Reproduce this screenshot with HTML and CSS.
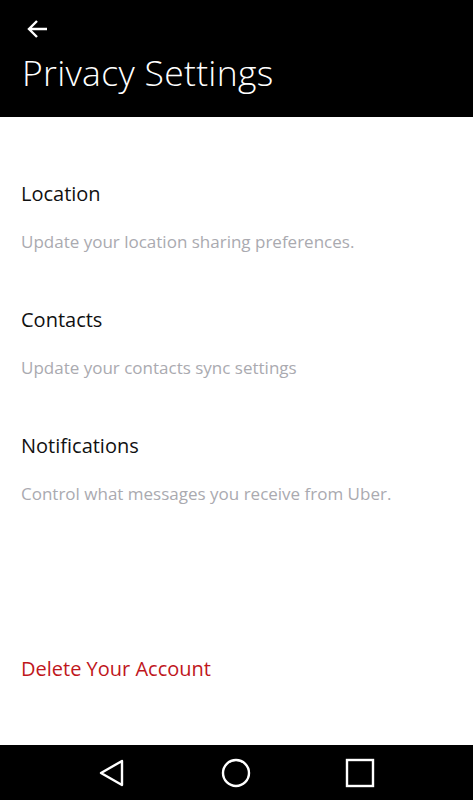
FILE: index.html
```html
<!DOCTYPE html>
<html lang="en">
<head>
    <meta charset="UTF-8">
    <meta name="viewport" content="width=device-width, initial-scale=1.0">
    <title>Privacy Settings</title>
    <link rel="stylesheet" href="styles.css">
</head>
<body>
    <div class="screen">
        <header class="topbar">
            <svg class="back" width="22" height="20" viewBox="0 0 22 20">
                <path d="M21 10H3M11 2L3 10l8 8" fill="none" stroke="#fff" stroke-width="2.4"/>
            </svg>
            <h1>Privacy Settings</h1>
        </header>

        <main class="content">
            <div class="setting">
                <h2>Location</h2>
                <p>Update your location sharing preferences.</p>
            </div>
            <div class="setting">
                <h2>Contacts</h2>
                <p>Update your contacts sync settings</p>
            </div>
            <div class="setting">
                <h2>Notifications</h2>
                <p>Control what messages you receive from Uber.</p>
            </div>

            <a class="delete" href="#">Delete Your Account</a>
        </main>

        <nav class="navbar">
            <svg width="28" height="30" viewBox="0 0 28 30">
                <path d="M24 3L3 15l21 12z" fill="none" stroke="#fff" stroke-width="2.4" stroke-linejoin="round"/>
            </svg>
            <svg width="30" height="30" viewBox="0 0 30 30">
                <circle cx="15" cy="15" r="13" fill="none" stroke="#fff" stroke-width="2.4"/>
            </svg>
            <svg width="30" height="30" viewBox="0 0 30 30">
                <rect x="2" y="2" width="26" height="26" fill="none" stroke="#fff" stroke-width="2.4"/>
            </svg>
        </nav>
    </div>
</body>
</html>
```

FILE: styles.css
```css
body {
    margin: 0;
    font-family: "Open Sans", "Noto Sans", sans-serif;
    background-color: #fff;
}
.screen {
    width: 473px;
    height: 800px;
    display: flex;
    flex-direction: column;
}
.topbar {
    background-color: #000;
    color: #fff;
    height: 117px;
    box-sizing: border-box;
    padding: 19px 0 0 22px;
}
.back {
    display: block;
    margin-left: 4px;
}
.topbar h1 {
    margin: 10px 0 0 0;
    font-weight: 300;
    font-size: 35.5px;
    line-height: 46px;
    letter-spacing: 0.3px;
}
.content {
    flex: 1;
    padding: 21px 21px 0 21px;
    display: flex;
    flex-direction: column;
}
.setting {
    padding-top: 30px;
}
.setting h2 {
    margin: 0;
    font-weight: 400;
    font-size: 20px;
    line-height: 52px;
    color: #111;
}
.setting p {
    margin: 0;
    font-size: 17px;
    line-height: 44px;
    color: #aaaab0;
}
.delete {
    margin-top: auto;
    margin-bottom: 63px;
    font-size: 20px;
    color: #c0161c;
    text-decoration: none;
}
.navbar {
    height: 55px;
    background-color: #000;
    display: flex;
    align-items: center;
    justify-content: space-between;
    padding: 0 98px 0 98px;
}
```
